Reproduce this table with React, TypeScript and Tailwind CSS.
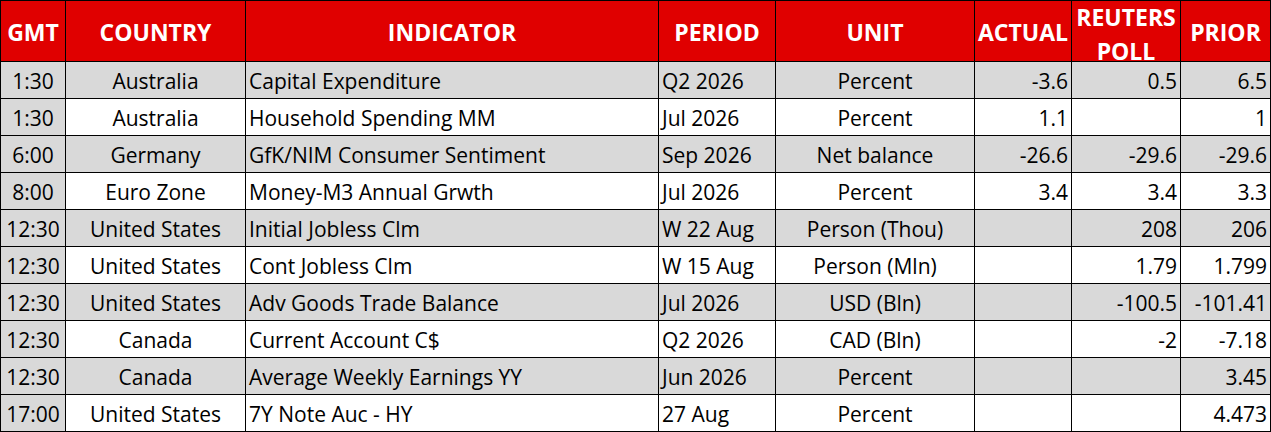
import React from "react";

type Row = {
  gmt: string;
  country: string;
  indicator: string;
  period: string;
  unit: string;
  actual: string;
  poll: string;
  prior: string;
};

const rows: Row[] = [
  { gmt: "1:30", country: "Australia", indicator: "Capital Expenditure", period: "Q2 2026", unit: "Percent", actual: "-3.6", poll: "0.5", prior: "6.5" },
  { gmt: "1:30", country: "Australia", indicator: "Household Spending MM", period: "Jul 2026", unit: "Percent", actual: "1.1", poll: "", prior: "1" },
  { gmt: "6:00", country: "Germany", indicator: "GfK/NIM Consumer Sentiment", period: "Sep 2026", unit: "Net balance", actual: "-26.6", poll: "-29.6", prior: "-29.6" },
  { gmt: "8:00", country: "Euro Zone", indicator: "Money-M3 Annual Grwth", period: "Jul 2026", unit: "Percent", actual: "3.4", poll: "3.4", prior: "3.3" },
  { gmt: "12:30", country: "United States", indicator: "Initial Jobless Clm", period: "W 22 Aug", unit: "Person (Thou)", actual: "", poll: "208", prior: "206" },
  { gmt: "12:30", country: "United States", indicator: "Cont Jobless Clm", period: "W 15 Aug", unit: "Person (Mln)", actual: "", poll: "1.79", prior: "1.799" },
  { gmt: "12:30", country: "United States", indicator: "Adv Goods Trade Balance", period: "Jul 2026", unit: "USD (Bln)", actual: "", poll: "-100.5", prior: "-101.41" },
  { gmt: "12:30", country: "Canada", indicator: "Current Account C$", period: "Q2 2026", unit: "CAD (Bln)", actual: "", poll: "-2", prior: "-7.18" },
  { gmt: "12:30", country: "Canada", indicator: "Average Weekly Earnings YY", period: "Jun 2026", unit: "Percent", actual: "", poll: "", prior: "3.45" },
  { gmt: "17:00", country: "United States", indicator: "7Y Note Auc - HY", period: "27 Aug", unit: "Percent", actual: "", poll: "", prior: "4.473" },
];

const head = "bg-[#e00000] text-white font-bold text-[23px] flex items-center justify-center text-center leading-[23px] pt-[3px] whitespace-nowrap";
const cell = "flex items-center text-[21px] leading-[24px] text-black pt-[2px] whitespace-nowrap overflow-hidden";

export default function App() {
  return (
    <div
      className="w-[1271px] h-[432px] bg-black p-px grid gap-px grid-cols-[64px_179px_412px_116px_198px_96px_108px_89px] grid-rows-[60px_repeat(10,36px)]"
      style={{ fontFamily: "'Open Sans', 'Liberation Sans', sans-serif" }}
    >
      <div className={head}>GMT</div>
      <div className={head}>COUNTRY</div>
      <div className={head}>INDICATOR</div>
      <div className={head}>PERIOD</div>
      <div className={head}>UNIT</div>
      <div className={head}>ACTUAL</div>
      <div className={head + " flex-col gap-[11px] pt-[6px]"}>
        <span>REUTERS</span>
        <span>POLL</span>
      </div>
      <div className={head}>PRIOR</div>

      {rows.map((r, i) => {
        const bg = i % 2 === 0 ? "bg-[#d9d9d9]" : "bg-white";
        return (
          <React.Fragment key={i}>
            <div className={`${cell} bg-[#d9d9d9] justify-center`}>{r.gmt}</div>
            <div className={`${cell} ${bg} justify-center`}>{r.country}</div>
            <div className={`${cell} ${bg} pl-[3px]`}>{r.indicator}</div>
            <div className={`${cell} ${bg} pl-[3px]`}>{r.period}</div>
            <div className={`${cell} ${bg} justify-center`}>{r.unit}</div>
            <div className={`${cell} ${bg} justify-end pr-[3px]`}>{r.actual}</div>
            <div className={`${cell} ${bg} justify-end pr-[3px]`}>{r.poll}</div>
            <div className={`${cell} ${bg} justify-end pr-[3px]`}>{r.prior}</div>
          </React.Fragment>
        );
      })}
    </div>
  );
}
